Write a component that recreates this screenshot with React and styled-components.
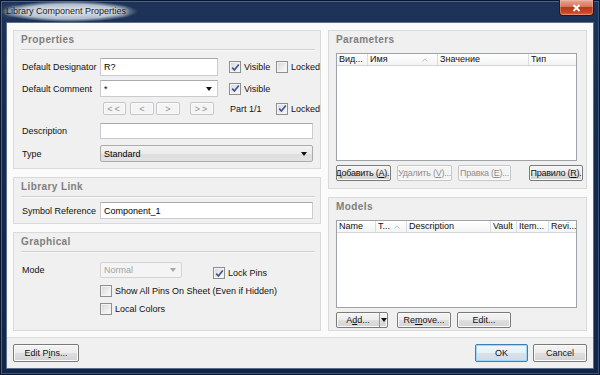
import React from 'react';
import styled, { createGlobalStyle } from 'styled-components';

const GlobalStyle = createGlobalStyle`
  html, body { margin: 0; padding: 0; }
  body {
    width: 600px;
    height: 375px;
    overflow: hidden;
    font-family: "Liberation Sans", Arial, sans-serif;
    font-size: 9px;
    color: #111;
  }
`;

const Window = styled.div`
  box-sizing: border-box;
  width: 600px;
  height: 375px;
  display: flex;
  flex-direction: column;
  border: 1px solid #0b1730;
  background: linear-gradient(180deg, #1d3458 0%, #152b4e 35%, #112649 100%);
  box-shadow: inset 1px 1px 0 #4a6288, inset -1px -1px 0 #3b5378;
`;

const TitleBar = styled.div`
  height: 21px;
  display: flex;
  justify-content: space-between;
  align-items: flex-start;
  padding-right: 5px;
`;

const Title = styled.div`
  height: 21px;
  line-height: 21px;
  padding: 0 12px 0 5px;
  font-size: 9px;
  color: #1b1b1b;
  background: radial-gradient(ellipse closest-side, rgba(226, 233, 243, 0.95) 0%, rgba(214, 223, 236, 0.8) 70%, rgba(200, 212, 230, 0) 100%);
  text-shadow: 0 0 4px #fff, 0 0 6px rgba(255, 255, 255, 0.8);
`;

const CloseBtn = styled.div`
  box-sizing: border-box;
  width: 35px;
  height: 16px;
  margin-top: -1px;
  display: flex;
  align-items: center;
  justify-content: center;
  border: 1px solid #3c1208;
  border-top: none;
  border-radius: 0 0 4px 4px;
  background: linear-gradient(180deg, #e9a796 0%, #d4745c 45%, #b8391b 50%, #c94a28 85%, #d8714f 100%);
  box-shadow: inset 0 0 0 1px rgba(255, 200, 180, 0.35);
`;

const Client = styled.div`
  flex: 1;
  margin: 0 5px 5px;
  display: flex;
  flex-direction: column;
  border: 1px solid #5d6f8e;
  background: #fbfbfb;
`;

const Body = styled.div`
  display: flex;
  gap: 7px;
  padding: 7px 6px 0;
  height: 301px;
`;

const Column = styled.div`
  width: ${p => p.$w}px;
  display: flex;
  flex-direction: column;
  gap: 8px;
`;

const Panel = styled.section`
  box-sizing: border-box;
  height: ${p => p.$h}px;
  display: flex;
  flex-direction: column;
  padding: 0 ${p => p.$pr || 5}px 0 7px;
  background: #f0f0f0;
  border: 1px solid #dadada;
`;

const PanelTitle = styled.div`
  height: 18px;
  line-height: 18px;
  font-size: 10px;
  font-weight: bold;
  letter-spacing: 0.4px;
  color: #7e7e7e;
  border-bottom: 1px solid ${p => (p.$rule ? '#cfcfcf' : 'transparent')};
  box-shadow: ${p => (p.$rule ? '0 1px 0 #fafafa' : 'none')};
`;

const Row = styled.div`
  display: flex;
  align-items: center;
  height: ${p => p.$h}px;
  margin-top: ${p => p.$mt}px;
`;

const Label = styled.div`
  box-sizing: border-box;
  width: 79px;
  flex: none;
  padding-left: 1px;
  white-space: nowrap;
  color: #111;
`;

const Spacer = styled.div`
  width: ${p => p.$w}px;
  flex: none;
`;

const TextBox = styled.div`
  box-sizing: border-box;
  width: ${p => p.$w}px;
  height: 100%;
  flex: none;
  display: flex;
  align-items: center;
  padding-left: 3px;
  background: #fff;
  border: 1px solid #c9cbcf;
  border-top-color: #a9abb0;
  color: #000;
`;

const Combo = styled.div`
  box-sizing: border-box;
  width: ${p => p.$w}px;
  height: 100%;
  flex: none;
  display: flex;
  align-items: center;
  justify-content: space-between;
  padding: 0 5px 0 3px;
  color: ${p => (p.$disabled ? '#a3a3a3' : '#000')};
  border: 1px solid ${p => (p.$disabled ? '#d3d3d3' : p.$drop ? '#acacac' : '#c9cbcf')};
  border-top-color: ${p => (p.$disabled ? '#d3d3d3' : p.$drop ? '#acacac' : '#a9abb0')};
  border-radius: ${p => (p.$drop ? '2px' : '0')};
  background: ${p =>
    p.$disabled ? '#f4f4f4' : p.$drop ? 'linear-gradient(180deg, #f3f3f3 0%, #ebebeb 50%, #dedede 51%, #e2e2e2 100%)' : '#fff'};
`;

const Arrow = styled.span`
  width: 0;
  height: 0;
  border-left: 3px solid transparent;
  border-right: 3px solid transparent;
  border-top: 4px solid ${p => (p.$muted ? '#a8a8a8' : '#111')};
`;

const Box = styled.span`
  box-sizing: border-box;
  width: 12px;
  height: 12px;
  flex: none;
  display: flex;
  align-items: center;
  justify-content: center;
  border: 1px solid #8e8f8f;
  background: linear-gradient(135deg, #d3d6da 0%, #ebecee 55%, #fbfbfb 100%);
  box-shadow: inset 0 0 0 1px #f3f3f3;
`;

const CheckItem = styled.label`
  display: flex;
  align-items: center;
  gap: 3px;
  flex: none;
  width: ${p => (p.$w ? `${p.$w}px` : 'auto')};
  white-space: nowrap;
  color: #111;
  align-self: ${p => (p.$low ? 'flex-end' : 'center')};
  margin-bottom: ${p => (p.$low ? '-1px' : '0')};
`;

const Btn = styled.button`
  box-sizing: border-box;
  width: ${p => p.$w}px;
  height: ${p => p.$h || 16}px;
  flex: none;
  padding: 0;
  display: flex;
  align-items: center;
  justify-content: center;
  overflow: hidden;
  white-space: nowrap;
  font-family: inherit;
  font-size: 9px;
  letter-spacing: ${p => (p.$spaced ? '2px' : p.$tight ? '-0.25px' : '0')};
  color: ${p => (p.disabled ? '#8f8f8f' : '#111')};
  border: 1px solid ${p => (p.disabled ? '#c6c6c6' : p.$primary ? '#3c7fb1' : '#7a7a7a')};
  border-radius: 2px;
  background: ${p =>
    p.disabled
      ? '#f4f4f4'
      : p.$primary
        ? 'linear-gradient(180deg, #f2f7fb 0%, #e8f0f6 49%, #d8e3ec 50%, #cfdbe6 100%)'
        : 'linear-gradient(180deg, #f4f4f4 0%, #ececec 49%, #dfdfdf 50%, #d3d3d3 100%)'};
  box-shadow: inset 0 0 0 1px ${p => (p.disabled ? '#fbfbfb' : p.$primary ? '#9fd8f6' : '#fbfbfb')};
`;

const SplitBtn = styled(Btn)`
  justify-content: flex-start;
  padding: 0;
`;

const SplitMain = styled.span`
  width: 42px;
  text-align: center;
`;

const SplitArrow = styled.span`
  flex: 1;
  height: 100%;
  display: flex;
  align-items: center;
  justify-content: center;
  border-left: 1px solid #9a9a9a;
`;

const ButtonRow = styled.div`
  display: flex;
  gap: ${p => p.$gap || 6}px;
  margin-top: 4px;
`;

const Table = styled.div`
  box-sizing: border-box;
  width: 241px;
  height: ${p => p.$h}px;
  margin-top: 3px;
  background: #fff;
  border: 1px solid #9ea3aa;
`;

const HeadRow = styled.div`
  display: flex;
  height: 11px;
  border-bottom: 1px solid #d5d5d5;
  background: linear-gradient(180deg, #ffffff 0%, #f3f4f6 100%);
`;

const HeadCell = styled.div`
  box-sizing: border-box;
  width: ${p => (p.$w ? `${p.$w}px` : 'auto')};
  flex: ${p => (p.$w ? 'none' : 1)};
  display: flex;
  align-items: center;
  padding: 0 ${p => p.$pr || 0}px 0 2px;
  overflow: hidden;
  white-space: nowrap;
  border-right: ${p => (p.$last ? 'none' : '1px solid #dcdde0')};
  color: #111;
  line-height: 11px;
`;

const Grow = styled.span`
  flex: 1;
`;

const Footer = styled.div`
  flex: 1;
  display: flex;
  align-items: flex-start;
  gap: 5px;
  margin-top: 6px;
  padding: 6px 6px 0;
  border-top: 1px solid #dcdcdc;
  background: #f0f0f0;
`;

const Part = styled.span`
  width: 46px;
  flex: none;
  color: #111;
`;

const Check = ({ checked }) => (
  <Box>
    {checked && (
      <svg width="9" height="9" viewBox="0 0 9 9">
        <path d="M1.2 4.6 L3.4 7 L7.8 1.4" fill="none" stroke="#3d5291" strokeWidth="1.6" />
      </svg>
    )}
  </Box>
);

const SortMark = () => (
  <svg width="6" height="4" viewBox="0 0 6 4">
    <path d="M0.5 3.5 L3 0.8 L5.5 3.5" fill="none" stroke="#b4b8bf" strokeWidth="0.9" />
  </svg>
);

const paramCols = [
  { title: 'Вид...', w: 31 },
  { title: 'Имя', w: 70, sort: true, pr: 9 },
  { title: 'Значение', w: 91 },
  { title: 'Тип' },
];

const modelCols = [
  { title: 'Name', w: 39 },
  { title: 'T...', w: 31, sort: true, pr: 6 },
  { title: 'Description', w: 84 },
  { title: 'Vault', w: 26 },
  { title: 'Item...', w: 32 },
  { title: 'Revi...' },
];

const Header = ({ cols }) => (
  <HeadRow>
    {cols.map((c, i) => (
      <HeadCell key={c.title} $w={c.w} $pr={c.pr} $last={i === cols.length - 1}>
        {c.title}
        {c.sort && (
          <>
            <Grow />
            <SortMark />
          </>
        )}
      </HeadCell>
    ))}
  </HeadRow>
);

export default function App() {
  return (
    <>
      <GlobalStyle />
      <Window>
        <TitleBar>
          <Title>Library Component Properties</Title>
          <CloseBtn>
            <svg width="9" height="8" viewBox="0 0 9 8">
              <path d="M1.5 1 L7.5 7 M7.5 1 L1.5 7" stroke="#fff" strokeWidth="1.9" />
            </svg>
          </CloseBtn>
        </TitleBar>

        <Client>
          <Body>
            <Column $w={308}>
              <Panel $h={139}>
                <PanelTitle $rule>Properties</PanelTitle>
                <Row $h={18} $mt={8}>
                  <Label>Default Designator</Label>
                  <TextBox $w={118}>R?</TextBox>
                  <Spacer $w={11} />
                  <CheckItem $w={47}>
                    <Check checked />
                    Visible
                  </CheckItem>
                  <CheckItem>
                    <Check />
                    Locked
                  </CheckItem>
                </Row>
                <Row $h={17} $mt={4}>
                  <Label>Default Comment</Label>
                  <Combo $w={118}>
                    *
                    <Arrow />
                  </Combo>
                  <Spacer $w={11} />
                  <CheckItem>
                    <Check checked />
                    Visible
                  </CheckItem>
                </Row>
                <Row $h={13} $mt={5}>
                  <Spacer $w={82} />
                  <Btn $w={23} $h={13} $spaced disabled>&lt;&lt;</Btn>
                  <Spacer $w={4} />
                  <Btn $w={24} $h={13} disabled>&lt;</Btn>
                  <Spacer $w={2} />
                  <Btn $w={24} $h={13} disabled>&gt;</Btn>
                  <Spacer $w={10} />
                  <Btn $w={24} $h={13} $spaced disabled>&gt;&gt;</Btn>
                  <Spacer $w={16} />
                  <Part>Part 1/1</Part>
                  <CheckItem>
                    <Check checked />
                    Locked
                  </CheckItem>
                </Row>
                <Row $h={16} $mt={8}>
                  <Label>Description</Label>
                  <TextBox $w={213} />
                </Row>
                <Row $h={17} $mt={6}>
                  <Label>Type</Label>
                  <Combo $w={213} $drop>
                    Standard
                    <Arrow />
                  </Combo>
                </Row>
              </Panel>

              <Panel $h={47}>
                <PanelTitle $rule>Library Link</PanelTitle>
                <Row $h={17} $mt={5}>
                  <Label>Symbol Reference</Label>
                  <TextBox $w={213}>Component_1</TextBox>
                </Row>
              </Panel>

              <Panel $h={99}>
                <PanelTitle $rule>Graphical</PanelTitle>
                <Row $h={16} $mt={10}>
                  <Label>Mode</Label>
                  <Combo $w={82} $drop $disabled>
                    Normal
                    <Arrow $muted />
                  </Combo>
                  <Spacer $w={31} />
                  <CheckItem $low>
                    <Check checked />
                    Lock Pins
                  </CheckItem>
                </Row>
                <Row $h={12} $mt={7}>
                  <Spacer $w={79} />
                  <CheckItem>
                    <Check />
                    Show All Pins On Sheet (Even if Hidden)
                  </CheckItem>
                </Row>
                <Row $h={12} $mt={6}>
                  <Spacer $w={79} />
                  <CheckItem>
                    <Check />
                    Local Colors
                  </CheckItem>
                </Row>
              </Panel>
            </Column>

            <Column $w={259}>
              <Panel $h={159} $pr={9}>
                <PanelTitle>Parameters</PanelTitle>
                <Table $h={108}>
                  <Header cols={paramCols} />
                </Table>
                <ButtonRow>
                  <Btn $w={55} $tight>Добавить (<u>A</u>)..</Btn>
                  <Btn $w={55} $tight disabled>Удалить (<u>V</u>)...</Btn>
                  <Btn $w={53} $tight disabled>Правка (<u>E</u>)...</Btn>
                  <Spacer $w={6} />
                  <Btn $w={54} $tight>Правило (<u>R</u>).</Btn>
                </ButtonRow>
              </Panel>

              <Panel $h={134} $pr={9}>
                <PanelTitle>Models</PanelTitle>
                <Table $h={88}>
                  <Header cols={modelCols} />
                </Table>
                <ButtonRow $gap={9}>
                  <SplitBtn $w={52}>
                    <SplitMain>A<u>d</u>d...</SplitMain>
                    <SplitArrow>
                      <Arrow />
                    </SplitArrow>
                  </SplitBtn>
                  <Btn $w={54}>Re<u>m</u>ove...</Btn>
                  <Btn $w={54} style={{ marginLeft: -3 }}>Edit...</Btn>
                </ButtonRow>
              </Panel>
            </Column>
          </Body>

          <Footer>
            <Btn $w={66} $h={18}>Edit P<u>i</u>ns...</Btn>
            <Grow />
            <Btn $w={53} $h={18} $primary>OK</Btn>
            <Btn $w={54} $h={18}>Cancel</Btn>
          </Footer>
        </Client>
      </Window>
    </>
  );
}
